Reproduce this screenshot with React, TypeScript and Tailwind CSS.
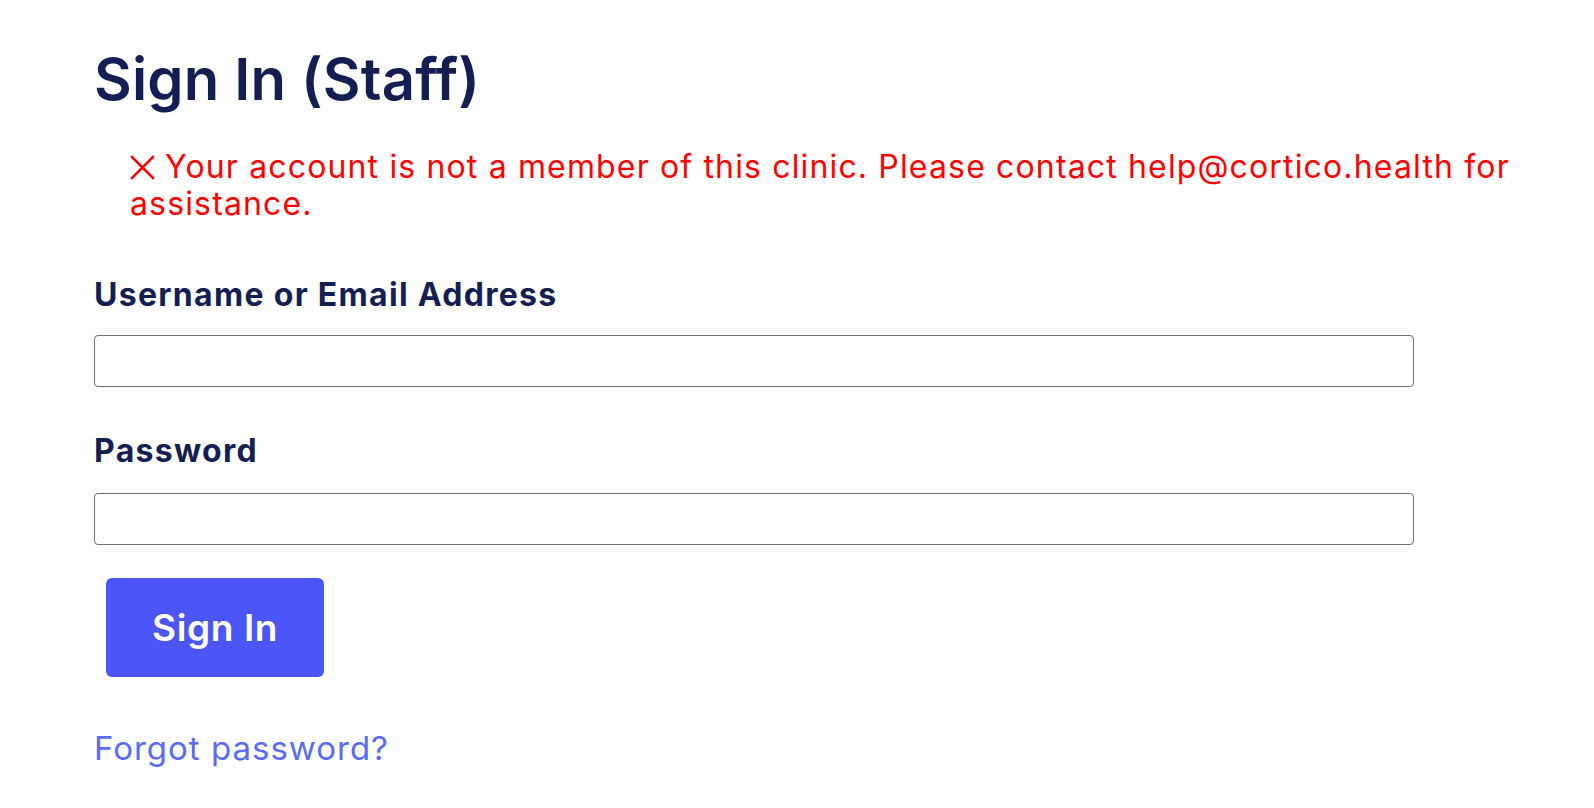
import React from 'react';

// Staff sign-in page with an account error message
export default function App() {
  return (
    <div className="min-h-screen bg-white font-['Inter',sans-serif]">
      <div className="pl-[94px] pt-[44px]">
        <h1 className="text-[58px] leading-[70px] font-semibold text-[#141e52] tracking-[0.2px]">
          Sign In (Staff)
        </h1>

        <ul className="mt-[34px] pl-[36px] w-[1440px] text-[32px] leading-[37px] tracking-[1.15px] text-[#ff0000]">
          <li className="pr-[10px]">
            <svg
              viewBox="0 0 24 24"
              className="inline-block w-[25px] h-[25px] mr-[10px] align-[-2px]"
              fill="none"
              stroke="#ff0000"
              strokeWidth="2.6"
              strokeLinecap="square"
            >
              <path d="M2 2 L22 22 M22 2 L2 22" />
            </svg>
            Your account is not a member of this clinic. Please contact help@cortico.health for assistance.
          </li>
        </ul>

        <form className="mt-[53px] w-[1320px]" onSubmit={(e) => e.preventDefault()}>
          <label htmlFor="username" className="block text-[32px] leading-[40px] font-bold tracking-[1.3px] text-[#141e52]">
            Username or Email Address
          </label>
          <input
            id="username"
            type="text"
            className="mt-[20px] block w-full h-[52px] rounded-[4px] border border-[#707070] bg-white px-3 text-[28px]"
          />

          <label htmlFor="password" className="mt-[44px] block text-[32px] leading-[40px] font-bold tracking-[1.3px] text-[#141e52]">
            Password
          </label>
          <input
            id="password"
            type="password"
            className="mt-[22px] block w-full h-[52px] rounded-[4px] border border-[#707070] bg-white px-3 text-[28px]"
          />

          <button
            type="submit"
            className="mt-[33px] ml-[12px] block w-[218px] h-[99px] rounded-[6px] bg-[#4b55f8] text-white text-[37px] font-semibold tracking-[0.6px]"
          >
            Sign In
          </button>
        </form>

        <a href="#" className="mt-[51px] inline-block text-[33px] leading-[40px] tracking-[1px] text-[#5a6bf6]">
          Forgot password?
        </a>
      </div>
    </div>
  );
}
